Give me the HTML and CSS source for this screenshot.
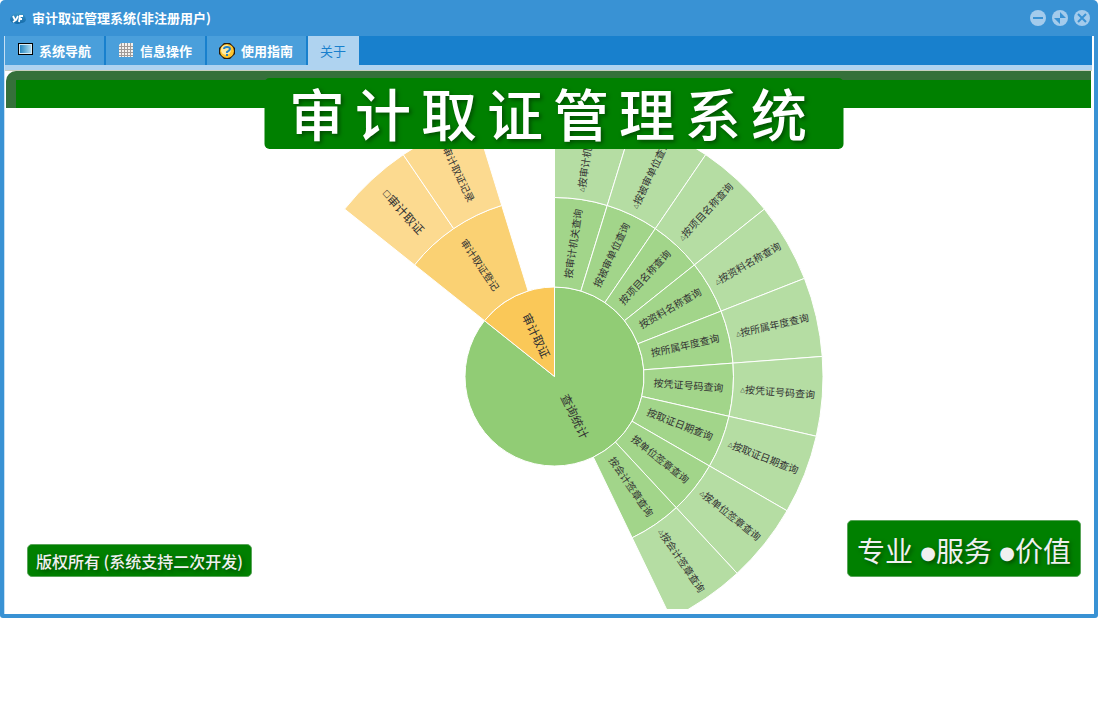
FILE: index.html
```html
<!DOCTYPE html>
<html lang="zh-CN">
<head>
    <meta charset="UTF-8" />
    <meta name="viewport" content="width=device-width, initial-scale=1.0"/>
    <title>审计取证管理系统</title>
    <link rel="stylesheet" href="styles.css">
</head>
<body>
<div class="window">
    <!-- Title bar -->
    <header class="titlebar">
        <svg class="logo" width="16" height="14" viewBox="0 0 16 14">
            <defs>
                <linearGradient id="logo-fill" x1="0" y1="0" x2="0" y2="1">
                    <stop offset="0" stop-color="#3f9bd0"/>
                    <stop offset="1" stop-color="#1268a6"/>
                </linearGradient>
            </defs>
            <path d="M4 3Q7 0 11 1Q13 1 14 4Q16 6 16 9Q15 12 11 12Q8 14 4 12Q0 11 0 8Q1 4 4 3Z" fill="url(#logo-fill)"/>
            <path d="M3 5L5 9M8 5L6 9L3 11M9 11L10 5H13M10 8H12" fill="none" stroke="#fff" stroke-width="1.800"/>
        </svg>
        <h1 class="window-title">审计取证管理系统(非注册用户)</h1>
        <div class="window-tools">
            <button type="button" aria-label="最小化">
                <svg width="16" height="16" viewBox="0 0 16 16"><circle cx="8" cy="8" r="8"/><path d="M3 8H13" /></svg>
            </button>
            <button type="button" aria-label="最大化">
                <svg width="16" height="16" viewBox="0 0 16 16"><circle cx="8" cy="8" r="8"/><path class="solid" d="M8 2V8H14ZM2 8H8V14Z"/></svg>
            </button>
            <button type="button" aria-label="关闭">
                <svg width="16" height="16" viewBox="0 0 16 16"><circle cx="8" cy="8" r="8"/><path d="M4 4L12 12M12 4L4 12"/></svg>
            </button>
        </div>
    </header>

    <div class="window-body">
        <!-- Menu -->
        <nav class="menu">
            <button type="button" class="menu-item">
                <svg width="16" height="16" viewBox="0 0 16 16">
                    <defs>
                        <linearGradient id="screen-fill">
                            <stop offset="0" stop-color="#2385c0"/>
                            <stop offset="1" stop-color="#a9d9f0"/>
                        </linearGradient>
                    </defs>
                    <rect x="1" y="0" width="15" height="12" fill="#000"/>
                    <rect x="2" y="1" width="13" height="10" fill="#d8ecf6"/>
                    <rect x="3" y="2" width="11" height="8" fill="url(#screen-fill)"/>
                </svg>
                系统导航
            </button>
            <button type="button" class="menu-item">
                <svg width="16" height="16" viewBox="0 0 16 16">
                    <path d="M3 0H15V14H1V2Z" fill="#f4f1ee"/>
                    <path d="M1 3.500H15M1 6.500H15M1 9.500H15M1 12.500H15M3.500 0V14M6.500 0V14M9.500 0V14M12.500 0V14" stroke="#a09b98" fill="none"/>
                </svg>
                信息操作
            </button>
            <button type="button" class="menu-item">
                <svg width="16" height="16" viewBox="0 0 16 16">
                    <path d="M5 0H11L16 5V11L11 16H5L0 11V5Z" fill="#2a1a08"/>
                    <circle cx="8" cy="8" r="7" fill="#ffc52e"/>
                    <circle cx="7" cy="7" r="5" fill="#ffe9a0"/>
                    <path d="M5 6Q5 4 8 4Q11 4 11 6Q11 7 8 9V10M8 11V13" fill="none" stroke="#2382c8" stroke-width="2"/>
                </svg>
                使用指南
            </button>
            <button type="button" class="menu-item active">关于</button>
        </nav>

        <main class="content">
            <div class="banner"></div>
            <div class="banner-title">审计取证管理系统</div>
            <div class="chart">
                <svg id="sunburst" width="537" height="501" viewBox="0 0 537 501"></svg>
            </div>
            <div class="note note-copyright">版权所有 (系统支持二次开发)</div>
            <div class="note note-slogan">专业 <span class="dot">●</span>服务 <span class="dot">●</span>价值</div>
        </main>
    </div>
</div>
<script src="chart.js"></script>
</body>
</html>
```

FILE: styles.css
```css
body {
    margin: 0;
    background: white;
    font-family: "Noto Sans CJK SC", sans-serif;
    font-size: 13px;
}

button {
    margin: 0;
    padding: 0;
    border: 0;
    background: none;
    font: inherit;
}

.window {
    margin-right: 1px;
    background: #3992d4;
    border-radius: 5px 5px 3px 3px;
    padding: 0 4px 4px 4px;
}

.titlebar {
    display: flex;
    align-items: center;
    height: 36px;
    padding: 0 4px 0 6px;
}

.window-title {
    margin: 0 auto 0 6px;
    font-size: 13px;
    line-height: 20px;
    font-weight: bold;
    color: white;
}

.window-tools {
    display: flex;
    gap: 6px;
}

.window-tools svg {
    display: block;
}

.window-tools circle {
    fill: #a3cbec;
}

.window-tools path {
    fill: none;
    stroke: #3992d4;
    stroke-width: 2;
}

.window-tools .solid {
    fill: #3992d4;
    stroke: none;
}

.window-body {
    border-left: 1px solid #c5dff4;
    border-right: 2px solid white;
    background: white;
}

.menu {
    display: flex;
    gap: 2px;
    height: 29px;
    background: #1880cd;
    border-bottom: 5px solid #afd3f0;
}

.menu-item {
    display: flex;
    align-items: center;
    gap: 6px;
    padding: 0 13px 0 12px;
    background: #4a9fdb;
    color: white;
    font-weight: bold;
}

.menu-item.active {
    background: #afd3f0;
    color: #1880cd;
    font-weight: normal;
}

.content {
    position: relative;
    padding: 0 1px 5px 1px;
    border-top: 1px solid #c9cfc0;
}

.banner {
    height: 28px;
    background: green;
    border: solid #35703a;
    border-width: 9px 0 0 10px;
    border-radius: 10px 0 0 0;
}

.banner-title {
    position: absolute;
    top: 7px;
    left: 50%;
    transform: translateX(-50%);
    margin-left: 5px;
    padding: 0 26px 4px 25px;
    background: green;
    border-radius: 5px;
    color: white;
    font-size: 56px;
    font-weight: 500;
    line-height: 67px;
    letter-spacing: 10px;
    white-space: nowrap;
    text-shadow: 2px 2px 4px #024a02;
}

/* the title and the notes lie over the chart */
.chart {
    display: flex;
    justify-content: center;
    padding-left: 11px;
}

.chart path {
    stroke: white;
    stroke-width: 1;
}

.chart text {
    font-size: 10px;
    fill: #333;
    text-anchor: middle;
    dominant-baseline: central;
}

.chart .large {
    font-size: 12px;
}

.chart .mark {
    font-family: "DejaVu Sans", sans-serif;
    font-size: 6px;
}

.chart .large .mark {
    font-size: 8px;
}

.note {
    position: absolute;
    bottom: 37px;
    background: green;
    border: 1px solid #5aa55a;
    border-radius: 5px;
    color: #f0f0f0;
    white-space: nowrap;
    text-shadow: 2px 2px 4px #024a02;
}

.note-copyright {
    left: 22px;
    padding: 2px 8px 0;
    font-size: 16px;
    line-height: 29px;
    font-weight: 500;
}

.note-slogan {
    right: 11px;
    padding: 3px 9px 0;
    font-size: 28px;
    line-height: 52px;
}

.dot {
    margin-left: 1px;
    font-family: "DejaVu Sans", sans-serif;
    font-size: 18px;
    line-height: 18px;
    vertical-align: 3px;
}
```

FILE: chart.js
```js
const center = 268.5;
const ring = 89.5;
const unit = 360 / 21;

const queries = ['按审计机关查询', '按被审单位查询', '按项目名称查询', '按资料名称查询', '按所属年度查询',
    '按凭证号码查询', '按取证日期查询', '按单位签章查询', '按会计签章查询'];

// start and span are counted in units, clockwise from the top
const sectors = [
    { level: 0, start: 0, span: 18, color: '#91cc75', name: '查询统计', size: 'large' },
    { level: 0, start: -3, span: 3, color: '#fac858', name: '审计取证', size: 'large' },
    { level: 1, start: -3, span: 2, color: '#fad173', name: '审计取证登记' },
    { level: 2, start: -3, span: 1, color: '#fcda90', name: '审计取证', size: 'large', mark: '□' },
    { level: 2, start: -2, span: 1, color: '#fcda90', name: '审计取证记录' }
];
queries.forEach((name, i) => {
    sectors.push({ level: 1, start: i, span: 1, color: '#a2d58a', name: name });
    sectors.push({ level: 2, start: i, span: 1, color: '#b5dda3', name: name, mark: '△' });
});

function point(radius, angle) {
    const rad = angle * Math.PI / 180;
    return `${center + radius * Math.sin(rad)} ${center - radius * Math.cos(rad)}`;
}

function sectorPath(s) {
    const inner = s.level * ring;
    const outer = inner + ring;
    const a = s.start * unit;
    const b = a + s.span * unit;
    const big = b - a > 180 ? 1 : 0;
    return `M${point(inner, a)}L${point(outer, a)}A${outer} ${outer} 0 ${big} 1 ${point(outer, b)}` +
        `L${point(inner, b)}A${inner} ${inner} 0 ${big} 0 ${point(inner, a)}Z`;
}

function sectorLabel(s) {
    const angle = (s.start + s.span / 2) * unit;
    const turn = angle < 0 ? angle + 90 : angle - 90;
    const mark = s.mark ? `<tspan class="mark">${s.mark}</tspan>` : '';
    return `<text class="${s.size || 'small'}" y="-2" transform="translate(${point((s.level + 0.5) * ring, angle)}) rotate(${turn})">${mark}${s.name}</text>`;
}

document.getElementById('sunburst').innerHTML =
    sectors.map(s => `<path d="${sectorPath(s)}" fill="${s.color}"/>`).join('') +
    sectors.map(sectorLabel).join('');
```
